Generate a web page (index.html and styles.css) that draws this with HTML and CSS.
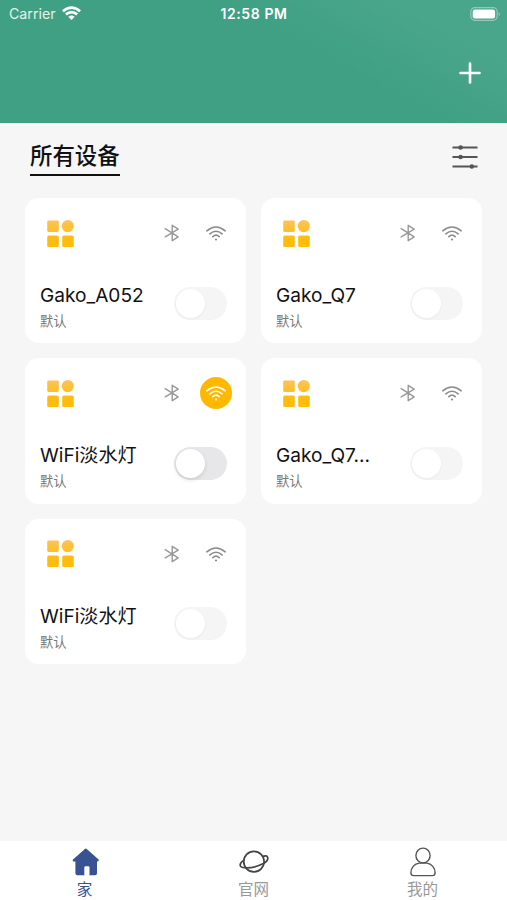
FILE: index.html
```html
<!DOCTYPE html>
<html lang="zh-CN">
<head>
  <meta charset="UTF-8">
  <meta name="viewport" content="width=device-width, initial-scale=1">
  <title>所有设备</title>
  <link rel="stylesheet" href="styles.css">
</head>
<body>

<!-- shared icons -->
<svg class="sprite" aria-hidden="true">
  <defs>
    <linearGradient id="amber" gradientUnits="userSpaceOnUse" x1="0" y1="0" x2="0" y2="27">
      <stop offset="0" stop-color="#fec356"/>
      <stop offset="0.7" stop-color="#ffbc0c"/>
    </linearGradient>
    <symbol id="icon-grid" viewBox="0 0 27 27">
      <g fill="url(#amber)">
        <rect x="0.2" y="0.4" width="11.6" height="11.6" rx="1.4"/>
        <circle cx="20.8" cy="6.1" r="6.1"/>
        <rect x="0.2" y="15.4" width="11.6" height="11.6" rx="1.6"/>
        <rect x="15.2" y="15.4" width="11.6" height="11.6" rx="1.6"/>
      </g>
    </symbol>
    <symbol id="icon-bluetooth" viewBox="0 0 16 18">
      <path d="M1.2 4.6L14.2 12.9L8.2 16.7V1.3L14.2 5.1L1.2 12.9" fill="none" stroke="currentColor" stroke-width="1.4" stroke-linecap="round" stroke-linejoin="round"/>
    </symbol>
    <symbol id="icon-wifi" viewBox="0 0 22 18">
      <g fill="none" stroke="currentColor" stroke-width="1.6" stroke-linecap="round">
        <path d="M1.8 6.8Q11 -0.8 20.2 6.8"/>
        <path d="M4.9 9.9Q11 4.6 17.1 9.9"/>
        <path d="M7.8 12.7Q11 9.7 14.2 12.7"/>
      </g>
      <circle cx="11" cy="15.5" r="1.1" fill="currentColor"/>
    </symbol>
  </defs>
</svg>

<div class="app">
  <header class="header">
    <div class="status">
      <div class="carrier">
        <span>Carrier</span>
        <svg width="19" height="15" viewBox="0 0 19 15">
          <g fill="none" stroke="#fff" stroke-width="2.7">
            <path d="M0.9 5.2Q9.5 -1.9 18.1 5.2"/>
            <path d="M3.9 8.4Q9.5 3.8 15.1 8.4"/>
          </g>
          <path d="M6.3 10.8Q9.5 8.1 12.7 10.8L9.5 14.1Z" fill="#fff"/>
        </svg>
      </div>
      <div class="time">12:58 PM</div>
      <div class="battery">
        <svg width="31" height="14" viewBox="0 0 31 14">
          <rect x="0.8" y="0.7" width="26.4" height="12.6" rx="4" fill="none" stroke="#fff" stroke-opacity="0.4" stroke-width="1.2"/>
          <rect x="2.7" y="2.5" width="22.4" height="9" rx="2.3" fill="#fff"/>
          <path d="M28.8 5.2Q31 7 28.8 8.8Z" fill="#fff" fill-opacity="0.5"/>
        </svg>
      </div>
    </div>
    <div class="toolbar">
      <svg class="add" width="22" height="22" viewBox="0 0 22 22">
        <path d="M11 1.5V20.5M1.5 11H20.5" stroke="#fff" stroke-width="2.6" stroke-linecap="round"/>
      </svg>
    </div>
  </header>

  <main class="content">
    <div class="title-row">
      <h1 class="title">所有设备</h1>
      <svg class="filter" width="26" height="26" viewBox="0 0 26 26">
        <path d="M0.5 3.5H25.5M0.5 13H25.5M0.5 22.5H25.5" stroke="#555" stroke-width="1.8"/>
        <g fill="#555">
          <circle cx="8.6" cy="3.5" r="2.3"/>
          <circle cx="8.6" cy="13" r="2.3"/>
          <circle cx="19.8" cy="22.5" r="2.3"/>
        </g>
      </svg>
    </div>

    <div class="devices">
      <div class="card">
        <div class="card-top">
          <svg class="grid-icon"><use href="#icon-grid"/></svg>
          <svg class="bluetooth"><use href="#icon-bluetooth"/></svg>
          <span class="wifi"><svg><use href="#icon-wifi"/></svg></span>
        </div>
        <div class="card-bottom">
          <div class="info">
            <div class="name">Gako_A052</div>
            <div class="room">默认</div>
          </div>
          <div class="switch"></div>
        </div>
      </div>

      <div class="card">
        <div class="card-top">
          <svg class="grid-icon"><use href="#icon-grid"/></svg>
          <svg class="bluetooth"><use href="#icon-bluetooth"/></svg>
          <span class="wifi"><svg><use href="#icon-wifi"/></svg></span>
        </div>
        <div class="card-bottom">
          <div class="info">
            <div class="name">Gako_Q7</div>
            <div class="room">默认</div>
          </div>
          <div class="switch"></div>
        </div>
      </div>

      <div class="card">
        <div class="card-top">
          <svg class="grid-icon"><use href="#icon-grid"/></svg>
          <svg class="bluetooth"><use href="#icon-bluetooth"/></svg>
          <span class="wifi connected"><svg><use href="#icon-wifi"/></svg></span>
        </div>
        <div class="card-bottom">
          <div class="info">
            <div class="name">WiFi淡水灯</div>
            <div class="room">默认</div>
          </div>
          <div class="switch enabled"></div>
        </div>
      </div>

      <div class="card">
        <div class="card-top">
          <svg class="grid-icon"><use href="#icon-grid"/></svg>
          <svg class="bluetooth"><use href="#icon-bluetooth"/></svg>
          <span class="wifi"><svg><use href="#icon-wifi"/></svg></span>
        </div>
        <div class="card-bottom">
          <div class="info">
            <div class="name">Gako_Q7...</div>
            <div class="room">默认</div>
          </div>
          <div class="switch"></div>
        </div>
      </div>

      <div class="card">
        <div class="card-top">
          <svg class="grid-icon"><use href="#icon-grid"/></svg>
          <svg class="bluetooth"><use href="#icon-bluetooth"/></svg>
          <span class="wifi"><svg><use href="#icon-wifi"/></svg></span>
        </div>
        <div class="card-bottom">
          <div class="info">
            <div class="name">WiFi淡水灯</div>
            <div class="room">默认</div>
          </div>
          <div class="switch"></div>
        </div>
      </div>
    </div>
  </main>

  <nav class="tabs">
    <a class="tab active">
      <svg width="30" height="30" viewBox="0 0 30 30">
        <path d="M14.9 1.9Q15.8 1.1 16.7 1.9L28.6 12.4Q29.5 14.3 27.5 14.5H27V26.2Q27 28.3 25 28.3H19.5V20.6Q19.5 19.3 18.2 19.3H15.6Q14.3 19.3 14.3 20.6V28.3H7.4Q5.4 28.3 5.4 26.2V14.5H4.1Q2.1 14.3 3 12.4Z" fill="#395294"/>
      </svg>
      <span>家</span>
    </a>
    <a class="tab">
      <svg width="30" height="30" viewBox="0 0 30 30">
        <g fill="none" stroke="#444" stroke-width="1.7" stroke-linecap="round" stroke-linejoin="round">
          <circle cx="14.9" cy="14.6" r="10.2"/>
          <path d="M4.7 13.4C2.2 15 0.8 17.4 1.4 19C2 20.6 4.4 20.9 7.6 20.9C12.6 20.9 19.4 19.1 24.4 16.6C27.4 14.9 29.2 12.5 28.7 10.5C28.2 8.7 26.4 8.4 24 9.4"/>
        </g>
      </svg>
      <span>官网</span>
    </a>
    <a class="tab">
      <svg width="30" height="30" viewBox="0 0 30 30">
        <g fill="none" stroke="#555" stroke-width="1.4">
          <ellipse cx="15" cy="8.5" rx="7.1" ry="7.4"/>
          <path d="M11.3 16.1H18.7C23.8 16.6 27.1 21 27.1 25.7Q27.1 28.6 24.2 28.6H5.8Q2.9 28.6 2.9 25.7C2.9 21 6.2 16.6 11.3 16.1Z"/>
        </g>
      </svg>
      <span>我的</span>
    </a>
  </nav>
</div>

</body>
</html>
```
FILE: styles.css
```css
* {
  box-sizing: border-box;
  margin: 0;
  padding: 0;
}

body {
  font-family: Inter, "Noto Sans CJK SC", sans-serif;
  background-color: #f6f6f6;
  color: #111;
}

svg {
  display: block;
  flex-shrink: 0;
}

.sprite {
  width: 0;
  height: 0;
  position: absolute;
}

.app {
  height: 100vh;
  display: flex;
  flex-direction: column;
  overflow: hidden;
}

.header {
  height: 123px;
  flex-shrink: 0;
  background: linear-gradient(28deg, #3fa083 0%, #3fa083 60%, #4aa68b 85%);
  color: #fff;
}

.status {
  display: grid;
  grid-template-columns: 1fr auto 1fr;
  align-items: center;
  height: 27px;
  padding: 0 6px 0 9px;
}

.carrier {
  display: flex;
  align-items: center;
  gap: 6px;
  font-size: 14.2px;
  color: #e2f3ec;
}

.time {
  font-size: 14px;
  font-weight: 600;
  letter-spacing: 0.6px;
  margin-right: 2px;
}

.battery {
  display: flex;
  justify-content: flex-end;
}

.toolbar {
  display: flex;
  justify-content: flex-end;
  padding: 35px 26.5px 0 0;
}

.content {
  flex: 1;
  padding: 0 25px;
}

.title-row {
  display: flex;
  justify-content: space-between;
  align-items: flex-start;
  height: 75px;
  padding: 16px 4px 0 5px;
}

.title {
  height: 37px;
  border-bottom: 2.5px solid #111;
  font-size: 22.4px;
  font-weight: 500;
  line-height: 34px;
}

.filter {
  margin-top: 5px;
}

.devices {
  display: grid;
  grid-template-columns: 1fr 1fr;
  gap: 15px;
}

.card {
  height: 145.3px;
  padding: 19px 14px 0 15px;
  background-color: #fff;
  border-radius: 14px;
}

.card-top {
  display: flex;
  align-items: center;
  height: 32px;
}

.grid-icon {
  width: 27px;
  height: 27px;
  margin: 0 auto 0 7px;
}

.bluetooth {
  width: 16px;
  height: 18px;
  margin-right: 20px;
  color: #999;
}

.wifi {
  display: flex;
  align-items: center;
  justify-content: center;
  width: 32px;
  height: 32px;
  border-radius: 50%;
  color: #8c8c8c;
}

.wifi svg {
  width: 22px;
  height: 18px;
}

.connected {
  background-color: #ffb800;
  color: #fff;
}

.card-bottom {
  display: flex;
  justify-content: space-between;
  padding: 32px 5px 0 0;
}

.name {
  font-size: 19.1px;
  line-height: 29px;
  white-space: nowrap;
}

.room {
  font-size: 13.3px;
  line-height: 22px;
  color: #777;
}

.switch {
  width: 53px;
  height: 33px;
  margin-top: 5.5px;
  padding: 2px;
  border-radius: 17px;
  background-color: #f5f5f5;
}

.switch::before {
  content: "";
  display: block;
  width: 29px;
  height: 29px;
  border-radius: 50%;
  background-color: #fff;
  box-shadow: 0 1px 3px rgba(0, 0, 0, 0.05);
}

.enabled {
  background-color: #e7e7e9;
}

.enabled::before {
  box-shadow: 0 2px 4px rgba(0, 0, 0, 0.12);
}

.tabs {
  display: grid;
  grid-template-columns: repeat(3, 1fr);
  flex-shrink: 0;
  height: 59px;
  background-color: #fff;
}

.tab {
  display: flex;
  flex-direction: column;
  align-items: center;
  padding-top: 5.5px;
  font-size: 15.5px;
  line-height: 25px;
  color: #999;
}

.active {
  color: #395294;
}
```
